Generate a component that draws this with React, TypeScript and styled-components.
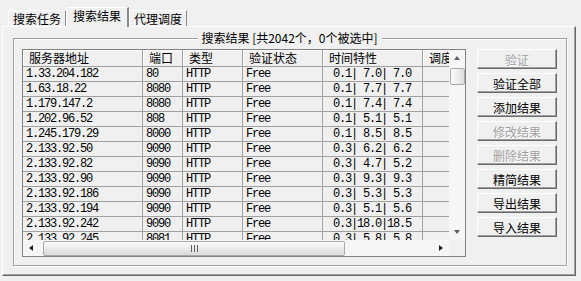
import React from "react";
import styled, { createGlobalStyle, css } from "styled-components";

const tabs = ["搜索任务", "搜索结果", "代理调度"];

const columns = [
  { title: "服务器地址", width: 120 },
  { title: "端口", width: 40 },
  { title: "类型", width: 60 },
  { title: "验证状态", width: 80 },
  { title: "时间特性", width: 100 },
  { title: "调度", width: 80 },
];

const rows = [
  ["1.33.204.182", "80", "0.1| 7.0| 7.0"],
  ["1.63.18.22", "8080", "0.1| 7.7| 7.7"],
  ["1.179.147.2", "8080", "0.1| 7.4| 7.4"],
  ["1.202.96.52", "808", "0.1| 5.1| 5.1"],
  ["1.245.179.29", "8000", "0.1| 8.5| 8.5"],
  ["2.133.92.50", "9090", "0.3| 6.2| 6.2"],
  ["2.133.92.82", "9090", "0.3| 4.7| 5.2"],
  ["2.133.92.90", "9090", "0.3| 9.3| 9.3"],
  ["2.133.92.186", "9090", "0.3| 5.3| 5.3"],
  ["2.133.92.194", "9090", "0.3| 5.1| 5.6"],
  ["2.133.92.242", "9090", "0.3|18.0|18.5"],
  ["2.133.92.245", "8081", "0.3| 5.8| 5.8"],
];

const buttons = [
  { label: "验证", disabled: true },
  { label: "验证全部" },
  { label: "添加结果" },
  { label: "修改结果", disabled: true },
  { label: "删除结果", disabled: true },
  { label: "精简结果" },
  { label: "导出结果" },
  { label: "导入结果" },
];

const gridCols = columns.map((c) => c.width + "px").join(" ");

const App = () => {
  return (
    <Window>
      <GlobalStyle />
      <TabStrip>
        {tabs.map((t, i) => (
          <Tab key={t} $active={i === 1}>
            {t}
          </Tab>
        ))}
      </TabStrip>
      <TabPanel>
        <GroupBox>
          <GroupTitle>搜索结果 [共2042个，0个被选中]</GroupTitle>
          <GroupBody>
            <ListView>
              <Viewport>
                <HeaderRow>
                  {columns.map((c) => (
                    <HeadCell key={c.title}>{c.title}</HeadCell>
                  ))}
                </HeaderRow>
                {rows.map((r) => (
                  <Row key={r[0]}>
                    <Cell>{r[0]}</Cell>
                    <Cell>{r[1]}</Cell>
                    <Cell>HTTP</Cell>
                    <Cell>Free</Cell>
                    <Cell $right>{r[2]}</Cell>
                    <Cell />
                  </Row>
                ))}
              </Viewport>
              <VScroll>
                <ArrowButton>
                  <Arrow $dir="up" />
                </ArrowButton>
                <VThumb />
                <Spacer />
                <ArrowButton>
                  <Arrow $dir="down" />
                </ArrowButton>
              </VScroll>
              <HScroll>
                <ArrowButton>
                  <Arrow $dir="left" />
                </ArrowButton>
                <HThumb>
                  <Grip />
                </HThumb>
                <Spacer />
                <ArrowButton>
                  <Arrow $dir="right" />
                </ArrowButton>
              </HScroll>
              <Corner />
            </ListView>
            <ButtonColumn>
              {buttons.map((b) => (
                <Button key={b.label} $disabled={b.disabled}>
                  {b.label}
                </Button>
              ))}
            </ButtonColumn>
          </GroupBody>
        </GroupBox>
      </TabPanel>
    </Window>
  );
};

const GlobalStyle = createGlobalStyle`
  html, body {
    margin: 0;
    padding: 0;
    background: #f0f0f0;
  }
  body {
    font-family: "Noto Sans CJK SC", "Liberation Sans", sans-serif;
    font-size: 12px;
    color: #000;
  }
`;

const Window = styled.div`
  width: 581px;
  height: 281px;
  background: #f0f0f0;
  overflow: hidden;
`;

const TabStrip = styled.div`
  display: flex;
  align-items: flex-end;
  height: 26px;
  padding-left: 8px;
`;

const Tab = styled.div<{ $active?: boolean }>`
  position: relative;
  box-sizing: border-box;
  height: 16px;
  padding: 0 4px;
  line-height: 16px;
  border-top: 1px solid #fff;
  border-left: 1px solid #fff;
  border-right: 1px solid #8a8a8a;
  background: #f0f0f0;
  white-space: nowrap;

  ${(p) =>
    p.$active &&
    css`
      z-index: 1;
      height: 20px;
      padding: 0 6px;
      margin-bottom: -1px;
      line-height: 16px;
      border-right: 2px solid #8a8a8a;
    `}
`;

const TabPanel = styled.div`
  box-sizing: border-box;
  width: 574px;
  height: 250px;
  margin-left: 2px;
  padding: 11px 8px 0 10px;
  border-top: 1px solid #fff;
  border-left: 1px solid #fff;
  border-right: 1px solid #696969;
  border-bottom: 1px solid #696969;
  box-shadow: inset -1px -1px 0 #a0a0a0;
`;

const GroupBox = styled.div`
  display: flex;
  flex-direction: column;
  border: 1px solid #a0a0a0;
  box-shadow: inset 1px 1px 0 #fff, 1px 1px 0 #fff;
`;

const GroupTitle = styled.div`
  align-self: center;
  margin-top: -8px;
  padding: 0 4px 0 3px;
  line-height: 14px;
  background: #f0f0f0;
  white-space: nowrap;
`;

const GroupBody = styled.div`
  display: flex;
  align-items: flex-start;
  gap: 11px;
  padding: 4px 9px 8px 8px;
`;

const ListView = styled.div`
  flex: 1;
  height: 208px;
  box-sizing: border-box;
  display: grid;
  grid-template-columns: 1fr 16px;
  grid-template-rows: 1fr 16px;
  border: 1px solid #828282;
  background: #f0f0f0;
  overflow: hidden;
`;

const Viewport = styled.div`
  overflow: hidden;
  min-width: 0;
`;

const HeaderRow = styled.div`
  display: grid;
  grid-template-columns: ${gridCols};
  height: 17px;
`;

const HeadCell = styled.div`
  box-sizing: border-box;
  padding-left: 6px;
  line-height: 15px;
  border-right: 1px solid #a0a0a0;
  border-bottom: 1px solid #a0a0a0;
  box-shadow: inset 1px 1px 0 #fff;
  white-space: nowrap;
  overflow: hidden;
`;

const Row = styled.div`
  display: grid;
  grid-template-columns: ${gridCols};
  height: 15px;
  box-sizing: border-box;
  border-bottom: 1px solid #a0a0a0;
`;

const Cell = styled.div<{ $right?: boolean }>`
  box-sizing: border-box;
  padding: 0 2px 0 3px;
  border-right: 1px solid #a0a0a0;
  font-family: "Liberation Mono", "DejaVu Sans Mono", monospace;
  font-size: 12px;
  letter-spacing: -1.2px;
  line-height: 14px;
  white-space: pre;
  overflow: hidden;

  ${(p) =>
    p.$right &&
    css`
      text-align: right;
      padding-right: 11px;
    `}
`;

const VScroll = styled.div`
  grid-column: 2;
  grid-row: 1;
  display: flex;
  flex-direction: column;
  align-items: center;
  background: #f6f6f6;
`;

const HScroll = styled.div`
  grid-column: 1;
  grid-row: 2;
  display: flex;
  align-items: center;
  background: #f6f6f6;
`;

const Corner = styled.div`
  grid-column: 2;
  grid-row: 2;
  background: #f0f0f0;
`;

const Spacer = styled.div`
  flex: 1;
`;

const ArrowButton = styled.div`
  flex: none;
  width: 16px;
  height: 16px;
  display: flex;
  align-items: center;
  justify-content: center;
`;

const Arrow = styled.span<{ $dir: "up" | "down" | "left" | "right" }>`
  width: 0;
  height: 0;
  border-style: solid;
  ${(p) =>
    p.$dir === "up" &&
    css`
      border-width: 0 3.5px 4px;
      border-color: transparent transparent #606060;
    `}
  ${(p) =>
    p.$dir === "down" &&
    css`
      border-width: 4px 3.5px 0;
      border-color: #606060 transparent transparent;
    `}
  ${(p) =>
    p.$dir === "left" &&
    css`
      border-width: 3.5px 4px 3.5px 0;
      border-color: transparent #202020 transparent transparent;
    `}
  ${(p) =>
    p.$dir === "right" &&
    css`
      border-width: 3.5px 0 3.5px 4px;
      border-color: transparent transparent transparent #202020;
    `}
`;

const VThumb = styled.div`
  box-sizing: border-box;
  width: 15px;
  height: 17px;
  margin-top: 2px;
  border: 1px solid #a9a9a9;
  border-radius: 2px;
  background: linear-gradient(to right, #fcfcfc, #dedede);
`;

const HThumb = styled.div`
  box-sizing: border-box;
  width: 302px;
  height: 15px;
  margin-left: 4px;
  display: flex;
  align-items: center;
  justify-content: center;
  border: 1px solid #a9a9a9;
  border-radius: 2px;
  background: linear-gradient(to bottom, #fcfcfc, #dadada);
`;

const Grip = styled.span`
  width: 7px;
  height: 7px;
  background: repeating-linear-gradient(
    to right,
    #606060 0 1px,
    transparent 1px 3px
  );
`;

const ButtonColumn = styled.div`
  display: flex;
  flex-direction: column;
  gap: 4px;
  width: 80px;
`;

const Button = styled.div<{ $disabled?: boolean }>`
  box-sizing: border-box;
  height: 20px;
  display: flex;
  align-items: center;
  justify-content: center;
  border-top: 1px solid #fff;
  border-left: 1px solid #fff;
  border-right: 1px solid #696969;
  border-bottom: 1px solid #696969;
  box-shadow: inset -1px -1px 0 #a0a0a0, 0 0 0 0 transparent;
  background: #f0f0f0;
  color: ${(p) => (p.$disabled ? "#a0a0a0" : "#000")};
  text-shadow: ${(p) => (p.$disabled ? "1px 1px 0 #fff" : "none")};
  white-space: nowrap;
  user-select: none;
`;

export default App;
